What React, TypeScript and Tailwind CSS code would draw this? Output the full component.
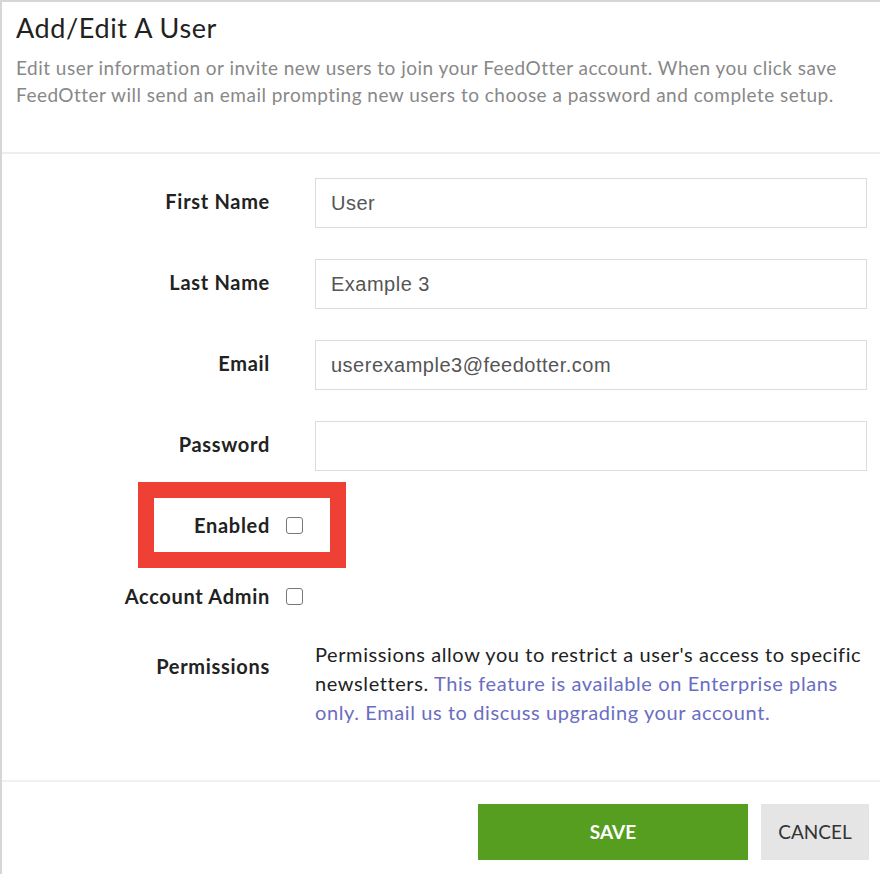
import { useState } from "react"

function Checkbox() {
    const [checked, setChecked] = useState(false)
    return (
        <button
            type="button"
            onClick={() => setChecked(!checked)}
            className="h-[17px] w-[17px] rounded-[3px] border-[1.5px] border-[#777] bg-white"
            aria-pressed={checked}
        />
    )
}

function TextRow({ label, value }: { label: string; value: string }) {
    return (
        <div className="mb-[31px] flex items-center">
            <label className="w-[268px] pb-[5px] text-right text-[20px] font-bold tracking-[0.7px] text-[#222]">{label}</label>
            <input
                defaultValue={value}
                className="ml-[45px] h-[50px] w-[552px] border border-[#dcdcdc] bg-white px-[15px] font-['Liberation_Sans',Arial,sans-serif] text-[20px] tracking-[0.5px] text-[#555] outline-none"
            />
        </div>
    )
}

export default function App() {
    return (
        <div className="h-[874px] w-[880px] overflow-hidden border-l-2 border-t-2 border-[#d6d6d6] bg-white font-['Lato',sans-serif]">
            <div className="h-[152px] border-b-2 border-[#eeeeee] px-[14px] pt-[10px]">
                <h1 className="text-[27px] leading-[32px] tracking-[0.6px] text-[#222]">Add/Edit A User</h1>
                <p className="mt-[10px] text-[19px] leading-[27px] tracking-[0.48px] text-[#888]">
                    Edit user information or invite new users to join your FeedOtter account. When you click save
                    FeedOtter will send an email prompting new users to choose a password and complete setup.
                </p>
            </div>

            <div className="h-[626px] pt-[24px]">
                <TextRow label="First Name" value="User" />
                <TextRow label="Last Name" value="Example 3" />
                <TextRow label="Email" value="userexample3@feedotter.com" />
                <TextRow label="Password" value="" />

                {/* margin collapses with the row above */}
                <div className="relative mt-[39px] flex h-[30px] items-center">
                    <span className="w-[268px] text-right text-[20px] font-bold tracking-[0.7px] text-[#222]">Enabled</span>
                    <span className="ml-[16px] flex items-center">
                        <Checkbox />
                    </span>
                    <div className="pointer-events-none absolute left-[136px] top-[-28px] h-[86px] w-[208px] border-[16px] border-[#ef4036]" />
                </div>

                <div className="mt-[41px] flex h-[30px] items-center">
                    <span className="w-[268px] text-right text-[20px] font-bold tracking-[0.7px] text-[#222]">Account Admin</span>
                    <span className="ml-[16px] flex items-center">
                        <Checkbox />
                    </span>
                </div>

                <div className="mt-[29px] flex">
                    <span className="w-[268px] pt-[11px] text-right text-[20px] font-bold tracking-[0.7px] text-[#222]">Permissions</span>
                    <p className="ml-[45px] w-[555px] text-[20px] leading-[29px] tracking-[0.6px] text-[#222]">
                        Permissions allow you to restrict a user's access to specific newsletters.{" "}
                        <a href="#" className="text-[#6a6dc2]">
                            This feature is available on Enterprise plans only. Email us to discuss upgrading your account.
                        </a>
                    </p>
                </div>
            </div>

            <div className="flex justify-end gap-[13px] border-t-2 border-[#f0f0f0] pr-[11px] pt-[22px]">
                <button className="h-[56px] w-[270px] bg-[#559e20] text-[19px] font-bold text-white">SAVE</button>
                <button className="h-[56px] w-[108px] bg-[#e5e5e5] text-[19px] text-[#333]">CANCEL</button>
            </div>
        </div>
    )
}
